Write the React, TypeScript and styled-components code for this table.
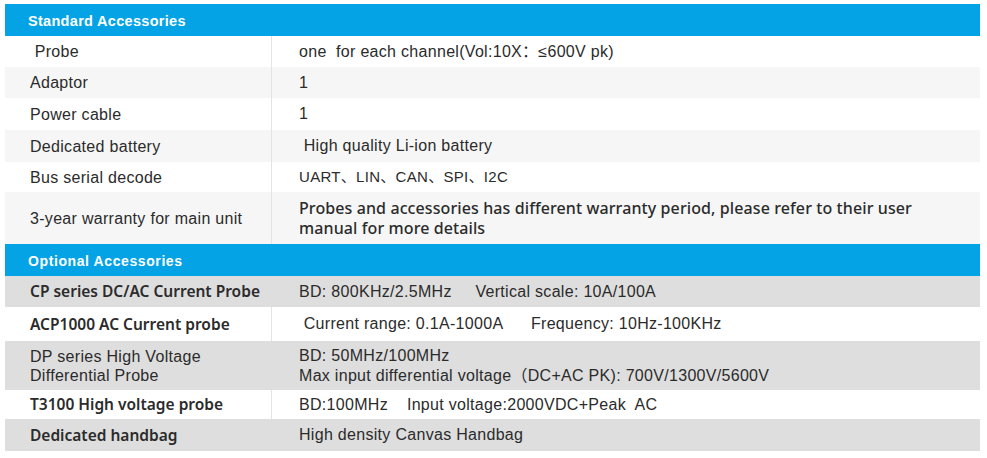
import styled, { createGlobalStyle } from "styled-components";

const GlobalStyle = createGlobalStyle`
  body {
    margin: 0;
    background: #fff;
    font-family: "Liberation Sans", Arial, "Noto Sans CJK SC", sans-serif;
    color: #2b2b2b;
  }
`;

type Tone = "white" | "light" | "dark";
type Face = "plain" | "narrow" | "noto" | "notoBold";

interface IRow {
  label: string;
  value: React.ReactNode;
  height: number;
  tone: Tone;
  labelFace?: Face;
  valueFace?: Face;
}

const toneColor: Record<Tone, string> = {
  white: "#ffffff",
  light: "#f6f6f6",
  dark: "#dedede",
};

const faceCss: Record<Face, string> = {
  plain: `font-family: "Liberation Sans", Arial, "Noto Sans CJK SC", sans-serif; font-size: 16px; letter-spacing: 0.3px;`,
  narrow: `font-family: "Liberation Sans", Arial, "Noto Sans CJK SC", sans-serif; font-size: 15px; letter-spacing: 0.3px;`,
  noto: `font-family: "Noto Sans", "Noto Sans CJK SC", sans-serif; font-size: 16px; font-weight: 500; letter-spacing: 0.1px;`,
  notoBold: `font-family: "Noto Sans", sans-serif; font-size: 15.5px; font-weight: 600;`,
};

const Table = styled.div`
  width: 975px;
  margin: 4px 0 0 5px;
  display: flex;
  flex-direction: column;
`;

const SectionHeader = styled.div<{ $heavy?: boolean }>`
  height: 31px;
  background: #03a3e6;
  color: #fff;
  font-weight: bold;
  font-size: ${(p) => (p.$heavy ? "14px" : "14.5px")};
  letter-spacing: ${(p) => (p.$heavy ? "0.6px" : "0.3px")};
  display: flex;
  align-items: center;
  padding-left: 23px;
  padding-top: 1px;
`;

const Row = styled.div<{ $tone: Tone; $h: number }>`
  display: grid;
  grid-template-columns: 267px 1fr;
  height: ${(p) => p.$h}px;
  background: ${(p) => toneColor[p.$tone]};
`;

const LabelCell = styled.div<{ $face: Face; $tone: Tone }>`
  display: flex;
  align-items: center;
  padding-left: 25px;
  border-right: 1px solid
    ${(p) => (p.$tone === "dark" ? "transparent" : "#e3e3e3")};
  line-height: 19px;
  white-space: pre-line;
  ${(p) => faceCss[p.$face]}
`;

const ValueCell = styled.div<{ $face: Face }>`
  display: flex;
  flex-direction: column;
  justify-content: center;
  padding-left: 27px;
  line-height: 20px;
  white-space: pre;
  ${(p) => faceCss[p.$face]}
`;

const standard: IRow[] = [
  { label: "\u00a0Probe", value: "one  for each channel(Vol:10X：≤600V pk)", height: 31, tone: "white" },
  { label: "Adaptor", value: "1", height: 31, tone: "light" },
  { label: "Power cable", value: "1", height: 32, tone: "white" },
  { label: "Dedicated battery", value: " High quality Li-ion battery", height: 32, tone: "light" },
  { label: "Bus serial decode", value: "UART、LIN、CAN、SPI、I2C", height: 30, tone: "white", valueFace: "narrow" },
  {
    label: "3-year warranty for main unit",
    value: (
      <>
        <span>Probes and accessories has different warranty period, please refer to their user</span>
        <span>manual for more details</span>
      </>
    ),
    height: 52,
    tone: "light",
    valueFace: "noto",
  },
];

const optional: IRow[] = [
  { label: "CP series DC/AC Current Probe", value: "BD: 800KHz/2.5MHz     Vertical scale: 10A/100A", height: 31, tone: "dark", labelFace: "notoBold" },
  { label: "ACP1000 AC Current probe", value: " Current range: 0.1A-1000A      Frequency: 10Hz-100KHz", height: 34, tone: "white", labelFace: "notoBold" },
  {
    label: "DP series High Voltage\nDifferential Probe",
    value: (
      <>
        <span>BD: 50MHz/100MHz</span>
        <span>Max input differential voltage（DC+AC PK): 700V/1300V/5600V</span>
      </>
    ),
    height: 49,
    tone: "dark",
  },
  { label: "T3100 High voltage probe", value: "BD:100MHz    Input voltage:2000VDC+Peak  AC", height: 29, tone: "white", labelFace: "notoBold" },
  { label: "Dedicated handbag", value: "High density Canvas Handbag", height: 32, tone: "dark", labelFace: "notoBold" },
];

function SpecRow({ label, value, height, tone, labelFace = "plain", valueFace = "plain" }: IRow) {
  return (
    <Row $tone={tone} $h={height}>
      <LabelCell $face={labelFace} $tone={tone}>
        {label}
      </LabelCell>
      <ValueCell $face={valueFace}>{value}</ValueCell>
    </Row>
  );
}

export default function App() {
  return (
    <>
      <GlobalStyle />
      <Table>
        <SectionHeader>Standard Accessories</SectionHeader>
        {standard.map((r) => (
          <SpecRow key={r.label} {...r} />
        ))}
        <SectionHeader $heavy>Optional Accessories</SectionHeader>
        {optional.map((r) => (
          <SpecRow key={r.label} {...r} />
        ))}
      </Table>
    </>
  );
}
